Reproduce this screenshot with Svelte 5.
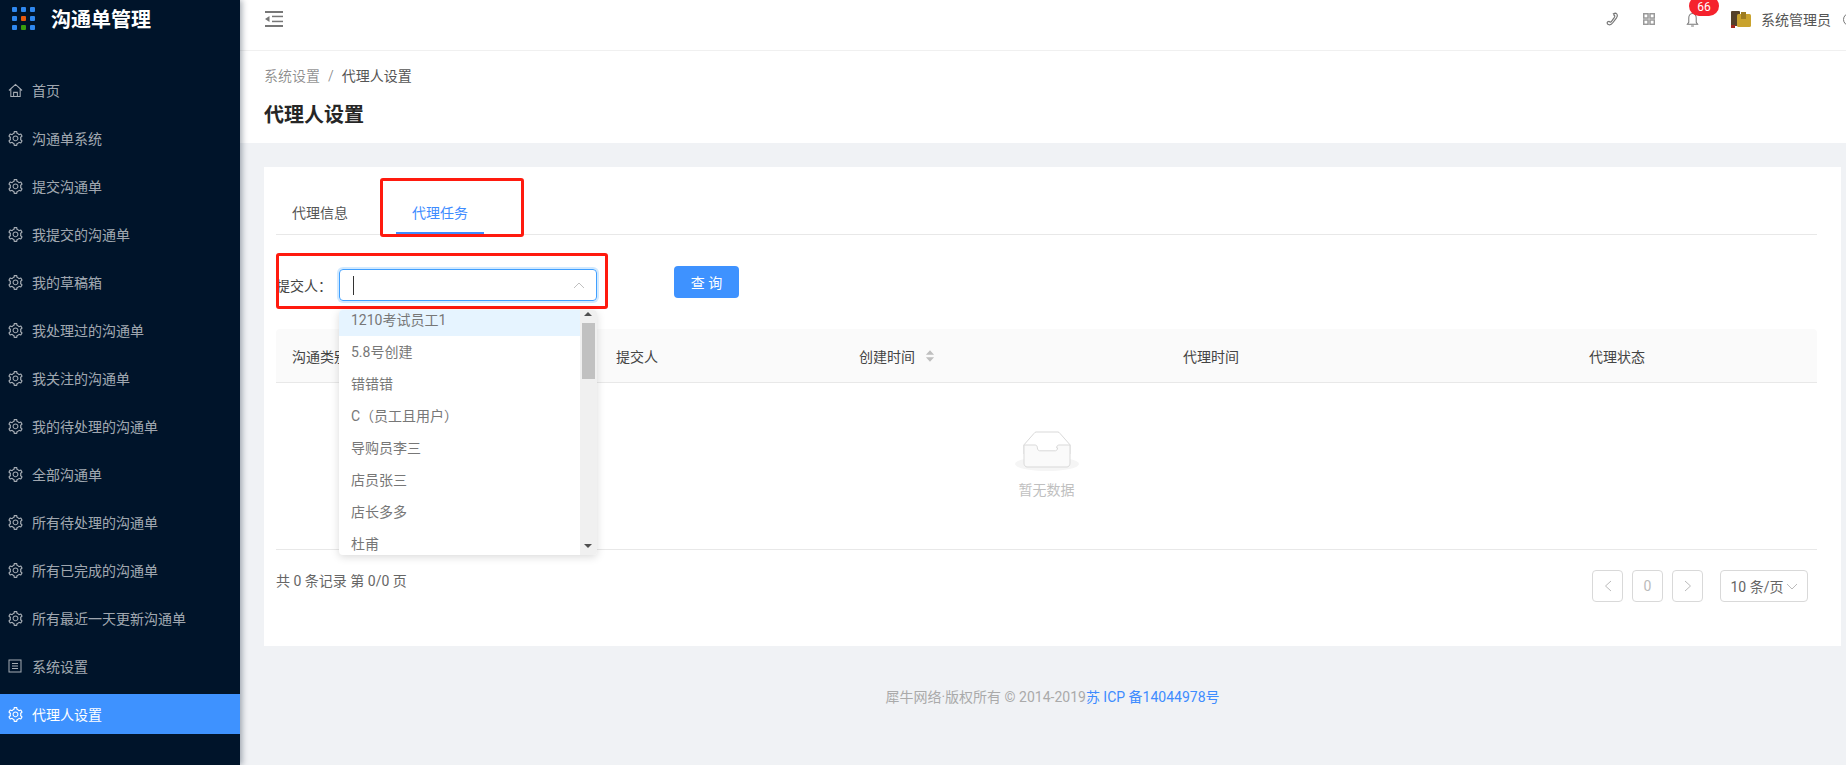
<script>
  const gear = "M924.8 625.7l-65.5-56c3.1-19 4.7-38.4 4.7-57.8s-1.6-38.8-4.7-57.8l65.5-56a32.03 32.03 0 0 0 9.3-35.2l-.9-2.6a443.74 443.74 0 0 0-79.7-137.9l-1.8-2.1a32.12 32.12 0 0 0-35.1-9.5l-81.3 28.9c-30-24.6-63.5-44-99.7-57.6l-15.7-85a32.05 32.05 0 0 0-25.8-25.7l-2.7-.5c-52.1-9.4-106.9-9.4-159 0l-2.7.5a32.05 32.05 0 0 0-25.8 25.7l-15.8 85.4a351.86 351.86 0 0 0-99 57.4l-81.9-29.1a32 32 0 0 0-35.1 9.5l-1.8 2.1a446.02 446.02 0 0 0-79.7 137.9l-.9 2.6c-4.5 12.5-.8 26.5 9.3 35.2l66.3 56.6c-3.1 18.8-4.6 38-4.6 57.1 0 19.2 1.5 38.4 4.6 57.1L99 625.5a32.03 32.03 0 0 0-9.3 35.2l.9 2.6c18.1 50.4 44.9 96.9 79.7 137.9l1.8 2.1a32.12 32.12 0 0 0 35.1 9.5l81.9-29.1c29.8 24.5 63.1 43.9 99 57.4l15.8 85.4a32.05 32.05 0 0 0 25.8 25.7l2.7.5a449.4 449.4 0 0 0 159 0l2.7-.5a32.05 32.05 0 0 0 25.8-25.7l15.7-85a350 350 0 0 0 99.7-57.6l81.3 28.9a32 32 0 0 0 35.1-9.5l1.8-2.1c34.8-41.1 61.6-87.5 79.7-137.9l.9-2.6c4.5-12.3.8-26.3-9.3-35zM788.3 465.9c2.5 15.1 3.8 30.6 3.8 46.1s-1.3 31-3.8 46.1l-6.6 40.1 74.7 63.9a370.03 370.03 0 0 1-42.6 73.6L721 702.8l-31.4 25.8c-23.9 19.6-50.5 35-79.3 45.8l-38.1 14.3-17.9 97a377.5 377.5 0 0 1-85 0l-17.9-97.2-37.8-14.5c-28.5-10.8-55-26.2-78.7-45.7l-31.4-25.9-93.4 33.2c-17-22.9-31.2-47.6-42.6-73.6l75.5-64.5-6.5-40c-2.4-14.9-3.7-30.3-3.7-45.5 0-15.3 1.2-30.6 3.7-45.5l6.5-40-75.5-64.5c11.3-26.1 25.6-50.7 42.6-73.6l93.4 33.2 31.4-25.9c23.7-19.5 50.2-34.9 78.7-45.7l37.9-14.3 17.9-97.2c28.1-3.2 56.8-3.2 85 0l17.9 97 38.1 14.3c28.7 10.8 55.4 26.2 79.3 45.8l31.4 25.8 92.8-32.9c17 22.9 31.2 47.6 42.6 73.6L781.8 426l6.5 39.9zM512 326c-97.2 0-176 78.8-176 176s78.8 176 176 176 176-78.8 176-176-78.8-176-176-176zm79.2 255.2A111.6 111.6 0 0 1 512 614c-29.9 0-58-11.7-79.2-32.8A111.6 111.6 0 0 1 400 502c0-29.9 11.7-58 32.8-79.2C454 401.6 482.1 390 512 390c29.9 0 58 11.6 79.2 32.8A111.6 111.6 0 0 1 624 502c0 29.9-11.7 58-32.8 79.2z";

  const menu = [
    { label: "首页", icon: "home" },
    { label: "沟通单系统", icon: "gear" },
    { label: "提交沟通单", icon: "gear" },
    { label: "我提交的沟通单", icon: "gear" },
    { label: "我的草稿箱", icon: "gear" },
    { label: "我处理过的沟通单", icon: "gear" },
    { label: "我关注的沟通单", icon: "gear" },
    { label: "我的待处理的沟通单", icon: "gear" },
    { label: "全部沟通单", icon: "gear" },
    { label: "所有待处理的沟通单", icon: "gear" },
    { label: "所有已完成的沟通单", icon: "gear" },
    { label: "所有最近一天更新沟通单", icon: "gear" },
    { label: "系统设置", icon: "box" },
    { label: "代理人设置", icon: "gear", active: true },
  ];

  const options = ["1210考试员工1", "5.8号创建", "错错错", "C（员工且用户）", "导购员李三", "店员张三", "店长多多", "杜甫"];
  const dots = ["#2f88f0", "#2f88f0", "#2f88f0", "#2f88f0", "#e8590c", "#2f88f0", "#2f88f0", "#389e0d", "#2f88f0"];
</script>

<div class="layout">
  <aside class="sider">
    <div class="brand">
      <div class="dots">
        {#each dots as c}
          <i style="background:{c}"></i>
        {/each}
      </div>
      <span>沟通单管理</span>
    </div>
    <ul class="menu">
      {#each menu as item}
        <li class:active={item.active}>
          {#if item.icon === "home"}
            <svg viewBox="0 0 16 16" width="15" height="15" fill="none" stroke="currentColor" stroke-width="1.1"><path d="M1 8 8 1.5 15 8M3 6.5V14.500H13V6.500M6 14.500V10H10V14.500" /></svg>
          {:else if item.icon === "box"}
            <svg viewBox="0 0 15 15" width="15" height="15" fill="none" stroke="currentColor"><rect x="1" y="1" width="12" height="12" /><path d="M4 4.500H10M4 7H10M4 9.500H10" /></svg>
          {:else}
            <svg viewBox="64 64 896 896" width="15" height="15" fill="currentColor"><path d={gear} /></svg>
          {/if}
          <span>{item.label}</span>
        </li>
      {/each}
    </ul>
  </aside>

  <div class="main">
    <header class="topbar">
      <svg viewBox="0 0 18 16" width="18" height="16" fill="#777"><rect x="0" y="0" width="18" height="2" /><rect x="0" y="14" width="18" height="2" /><rect x="7" y="4.700" width="11" height="1.500" /><rect x="7" y="9.700" width="11" height="1.500" /><path d="M0 8 4.500 5V11Z" /></svg>
      <div class="tools">
        <svg class="phone" viewBox="0 0 14 14" width="14" height="14" fill="none" stroke="#777" stroke-width="1.200"><path d="M9 1.500c1-.8 2-.5 2.800.5.800 1 .6 2.400-.3 3.800L8 10.500c-1.200 1.600-2.700 2.700-4 2.300-1-.3-2-1.300-1.800-2.200.1-.6 1.200-1.300 1.800-1.300.5 0 .9.800 1.400.8.500 0 1-.6 1.500-1.300l2.300-3.200c.4-.6.800-1.200.6-1.700-.2-.4-.9-.6-1-1.100-.1-.5.700-1.100 1.200-1.300z" /></svg>
        <svg class="grid" viewBox="0 0 12 12" width="12" height="12" fill="none" stroke="#999" stroke-width="1.500"><rect x=".75" y=".75" width="4.300" height="4.300" /><rect x="7" y=".75" width="4.300" height="4.300" /><rect x=".75" y="7" width="4.300" height="4.300" /><rect x="7" y="7" width="4.300" height="4.300" /></svg>
        <div class="bell">
          <svg viewBox="0 0 14 16" width="13" height="15" fill="none" stroke="#777" stroke-width="1.100"><path d="M7 1.500C4 1.500 3 4 3 6.500V11L1.500 13H12.500L11 11V6.500C11 4 10 1.500 7 1.500ZM5.500 15H8.500" /></svg>
          <b>66</b>
        </div>
        <svg class="avatar" viewBox="0 0 20 18" width="20" height="18"><rect x="0" y="1" width="9" height="15" rx="1" fill="#54412a" /><rect x="6" y="4" width="14" height="13" rx="1.500" fill="#c9a32e" /><rect x="10" y="2" width="5" height="7" fill="#9c7c22" /><rect x="0" y="15" width="4" height="3" fill="#a3261c" /></svg>
        <span class="name">系统管理员</span>
        <i class="ring"></i>
      </div>
    </header>

    <section class="pagehead">
      <div class="crumb"><span>系统设置</span><em>/</em><strong>代理人设置</strong></div>
      <h1>代理人设置</h1>
    </section>

    <div class="content">
      <div class="card">
        <div class="tabs">
          <span class="tab">代理信息</span>
          <span class="tab on">代理任务</span>
          <div class="mark tabmark"></div>
        </div>

        <div class="filter">
          <label for="who">提交人：</label>
          <div class="select">
            <input id="who" readonly />
            <i class="caret"></i>
            <svg viewBox="0 0 12 7" width="12" height="7" fill="none" stroke="#c0c0c0"><path d="M1 6 6 1 11 6" /></svg>
            <div class="dropdown">
              <ul>
                {#each options as o, i}
                  <li class:hover={i === 0}>{o}</li>
                {/each}
              </ul>
              <div class="scroll">
                <i class="up"></i>
                <i class="thumb"></i>
                <i class="down"></i>
              </div>
            </div>
          </div>
          <button>查 询</button>
          <div class="mark filtermark"></div>
        </div>

        <div class="table">
          <div class="row head">
            <span style="width:324px">沟通类别</span>
            <span style="width:243px">提交人</span>
            <span style="width:324px" class="sort">创建时间
              <svg viewBox="0 0 8 12" width="10" height="14" fill="#bfbfbf"><path d="M4 1 7.500 5H.5ZM4 11 .5 7H7.500Z" /></svg>
            </span>
            <span style="width:406px">代理时间</span>
            <span>代理状态</span>
          </div>
          <div class="empty">
            <svg viewBox="0 0 64 41" width="64" height="41">
              <ellipse cx="32" cy="33" rx="32" ry="7" fill="#f5f5f5" />
              <path d="M55 13.800 44.900 2.300C44.400 1.500 43.700 1 42.900 1H21.100c-.8 0-1.500.5-2 1.300L9 13.800V23h46z" fill="none" stroke="#d9d9d9" />
              <path d="M41.600 16.900c0-1.600 1-2.900 2.200-2.900H55v18.100c0 2.100-1.300 3.900-3 3.900H12c-1.700 0-3-1.800-3-3.900V14h11.200c1.200 0 2.200 1.300 2.200 2.900 0 1.600 1 2.900 2.200 2.900h15.800c1.200 0 2.200-1.300 2.200-2.900z" fill="#fafafa" stroke="#d9d9d9" />
            </svg>
            <p>暂无数据</p>
          </div>
        </div>

        <div class="pager">
          <span class="total">共 0 条记录 第 0/0 页</span>
          <div class="pages">
            <span class="pg"><svg viewBox="0 0 8 12" width="8" height="12" fill="none" stroke="#bbb"><path d="M7 1 1.500 6 7 11" /></svg></span>
            <span class="pg num">0</span>
            <span class="pg"><svg viewBox="0 0 8 12" width="8" height="12" fill="none" stroke="#bbb"><path d="M1 1 6.500 6 1 11" /></svg></span>
            <span class="size">10 条/页<svg viewBox="0 0 12 7" width="12" height="7" fill="none" stroke="#bbb"><path d="M1 1 6 6 11 1" /></svg></span>
          </div>
        </div>
      </div>
      <footer>犀牛网络·版权所有 © 2014-2019<a href="#top">苏 ICP 备14044978号</a></footer>
    </div>
  </div>
</div>

<style>
  :global(body) {
    margin: 0;
    overflow: hidden;
    font-family: Roboto, "Noto Sans CJK SC", sans-serif;
    font-size: 14px;
    color: #555;
  }
  * {
    box-sizing: border-box;
  }
  ul {
    list-style: none;
    margin: 0;
    padding: 0;
  }

  .layout {
    display: flex;
    width: 1846px;
    height: 765px;
    background: #f0f2f5;
    overflow: hidden;
  }

  .sider {
    flex: 0 0 240px;
    background: #00142a;
    box-shadow: 2px 0 6px rgba(0, 21, 41, 0.35);
    z-index: 2;
    color: rgba(255, 255, 255, 0.65);
  }
  .brand {
    display: flex;
    align-items: center;
    height: 36px;
    padding-left: 12px;
    gap: 16px;
    color: #fff;
    font-size: 20px;
    font-weight: 700;
  }
  .dots {
    display: grid;
    grid-template-columns: repeat(3, 5px);
    gap: 4px;
  }
  .dots i {
    height: 5px;
    border-radius: 1px;
  }
  .menu {
    margin-top: 34px;
  }
  .menu li {
    display: flex;
    align-items: center;
    height: 40px;
    margin-bottom: 8px;
    padding-left: 8px;
    gap: 9px;
  }
  .menu li.active {
    background: #3e92ff;
    color: #fff;
  }

  .main {
    flex: 1;
    min-width: 0;
    display: flex;
    flex-direction: column;
  }
  .topbar {
    display: flex;
    align-items: center;
    justify-content: space-between;
    flex: 0 0 51px;
    height: 51px;
    padding: 0 0 12px 25px;
    background: #fff;
    border-bottom: 1px solid #f0f0f0;
    position: relative;
  }
  .tools {
    display: flex;
    align-items: center;
  }
  .phone {
    margin-right: 24px;
  }
  .grid {
    margin-right: 31px;
  }
  .bell {
    position: relative;
    display: flex;
    margin-right: 32px;
  }
  .bell b {
    position: absolute;
    left: 3px;
    top: -16px;
    min-width: 30px;
    height: 20px;
    line-height: 23px;
    padding: 0 6px;
    border-radius: 10px;
    background: #f5222d;
    color: #fff;
    font-size: 12px;
    font-weight: 400;
    text-align: center;
  }
  .name {
    margin: 0 12px 0 10px;
    font-size: 14px;
    width: 70px;
    white-space: nowrap;
  }
  .ring {
    flex: none;
    width: 13px;
    height: 13px;
    border: 1px solid #777;
    border-radius: 50%;
    margin-right: -10px;
  }

  .pagehead {
    background: #fff;
    height: 92px;
    padding: 15px 24px 0;
  }
  .crumb {
    line-height: 20px;
    color: rgba(0, 0, 0, 0.45);
  }
  .crumb em {
    font-style: normal;
    margin: 0 8px;
  }
  .crumb strong {
    font-weight: 400;
    color: #555;
  }
  h1 {
    margin: 15px 0 0;
    font-size: 20px;
    font-weight: 600;
    line-height: 28px;
    color: #262626;
  }

  .content {
    flex: 1;
    padding: 24px 5px 0 24px;
  }
  .card {
    height: 479px;
    background: #fff;
    padding: 0 24px 0 12px;
  }

  .tabs {
    position: relative;
    display: flex;
    height: 68px;
    padding: 35px 16px 0;
    gap: 64px;
    border-bottom: 1px solid #e8e8e8;
  }
  .tab {
    position: relative;
    line-height: 22px;
    height: 32px;
  }
  .tab.on {
    color: #3e8cff;
  }
  .tab.on::after {
    content: "";
    position: absolute;
    left: -16px;
    right: -16px;
    bottom: 0;
    height: 2px;
    background: #3e8cff;
  }
  .mark {
    position: absolute;
    border: 3px solid #ff1a0e;
    border-radius: 3px;
    pointer-events: none;
  }
  .tabmark {
    left: 104px;
    top: 11px;
    width: 144px;
    height: 59px;
  }

  .filter {
    position: relative;
    display: flex;
    align-items: center;
    height: 94px;
  }
  .filter label {
    width: 63px;
    white-space: nowrap;
    color: #444;
    margin-top: 6px;
  }
  .select {
    position: relative;
    width: 258px;
    height: 32px;
    margin-top: 6px;
    border: 1px solid #40a0ff;
    border-radius: 4px;
    box-shadow: 0 0 0 2px rgba(24, 144, 255, 0.2);
    display: flex;
    align-items: center;
    justify-content: flex-end;
    padding-right: 11px;
  }
  .select input {
    position: absolute;
    inset: 0;
    border: 0;
    background: none;
    outline: 0;
  }
  .caret {
    position: absolute;
    left: 13px;
    top: 6px;
    width: 1px;
    height: 19px;
    background: #333;
  }
  .dropdown {
    position: absolute;
    left: -1px;
    top: 40px;
    width: 258px;
    height: 245px;
    display: flex;
    background: #fff;
    border-radius: 4px;
    box-shadow: 0 2px 8px rgba(0, 0, 0, 0.15);
    overflow: hidden;
    z-index: 5;
  }
  .dropdown ul {
    flex: 1;
    margin-top: -6px;
  }
  .dropdown li {
    height: 32px;
    line-height: 32px;
    padding-left: 12px;
    color: #777;
    white-space: nowrap;
  }
  .dropdown li.hover {
    background: #e6f4ff;
  }
  .scroll {
    position: relative;
    flex: 0 0 17px;
    background: #f0f0f0;
  }
  .scroll i {
    position: absolute;
    left: 2px;
  }
  .thumb {
    top: 13px;
    width: 13px;
    height: 56px;
    background: #c1c1c1;
  }
  .up,
  .down {
    left: 4px !important;
    width: 0;
    height: 0;
    border-left: 4px solid transparent;
    border-right: 4px solid transparent;
  }
  .up {
    top: 2px;
    border-bottom: 4px solid #505050;
  }
  .down {
    bottom: 7px;
    border-top: 4px solid #505050;
  }
  button {
    width: 65px;
    height: 32px;
    margin-left: 77px;
    margin-top: -1px;
    border: 0;
    border-radius: 4px;
    background: #3e92ff;
    color: #fff;
    font: inherit;
  }
  .filtermark {
    left: 0;
    top: 18px;
    width: 332px;
    height: 56px;
  }

  .table {
    border-bottom: 1px solid #e8e8e8;
    height: 221px;
  }
  .row.head {
    display: flex;
    align-items: center;
    height: 54px;
    padding-left: 16px;
    background: #fafafa;
    border-bottom: 1px solid #e8e8e8;
    color: #444;
    border-radius: 4px 4px 0 0;
  }
  .sort {
    display: flex;
    align-items: center;
    gap: 10px;
  }
  .empty {
    display: flex;
    flex-direction: column;
    align-items: center;
    padding-top: 48px;
    color: #bfbfbf;
  }
  .empty p {
    margin: 7px 0 0;
    line-height: 22px;
  }

  .pager {
    display: flex;
    justify-content: space-between;
    margin-top: 20px;
  }
  .total {
    line-height: 22px;
    color: #666;
  }
  .pages {
    display: flex;
    gap: 9px;
    margin-right: 9px;
  }
  .pg {
    display: flex;
    align-items: center;
    justify-content: center;
    width: 31px;
    height: 32px;
    border: 1px solid #d9d9d9;
    border-radius: 4px;
  }
  .num {
    color: #bbb;
  }
  .size {
    display: flex;
    align-items: center;
    justify-content: center;
    gap: 2px;
    width: 88px;
    height: 32px;
    margin-left: 8px;
    border: 1px solid #d9d9d9;
    border-radius: 4px;
    color: #666;
  }

  footer {
    margin-top: 40px;
    text-align: center;
    line-height: 22px;
    color: #aaa;
  }
  footer a {
    color: #3e8cff;
    text-decoration: none;
  }
</style>
